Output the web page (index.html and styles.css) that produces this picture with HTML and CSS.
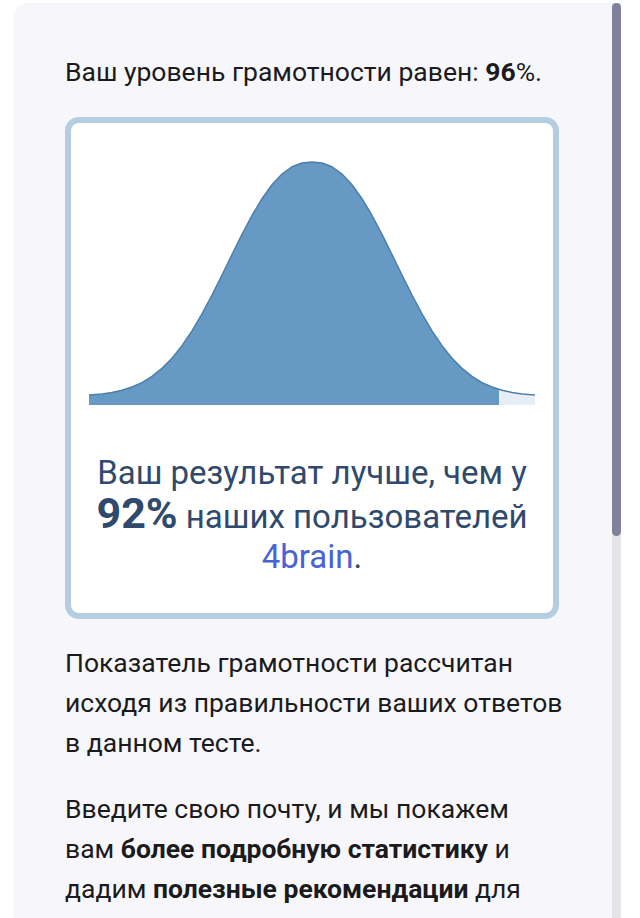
FILE: index.html
```html
<!DOCTYPE html>
<html lang="ru">
<head>
<meta charset="utf-8">
<title>Результат</title>
<link rel="stylesheet" href="styles.css">
</head>
<body>
<div class="screen">
  <main class="panel">
    <p class="lead">Ваш уровень грамотности равен: <b>96</b>%.</p>
    <section class="card">
      <svg class="chart" width="446" height="245" viewBox="0 0 446 245" aria-hidden="true">
        <defs>
          <clipPath id="done"><rect x="0" y="0" width="410" height="245"/></clipPath>
          <path id="bell" d="M0,235 L13,233.9 L23,232.4 L33,230.2 L43,227 L53,222.6 L63,216.4 L73,208.4 L83,198.2 L93,185.7 L103,170.9 L113,153.8 L123,135 L133,115 L143,94.5 L153,74.4 L163,55.5 L173,38.7 L183,24.7 L193,14 L203,6.8 L213,3 L223,2 L233,3 L243,6.8 L253,14 L263,24.7 L273,38.7 L283,55.5 L293,74.4 L303,94.5 L313,115 L323,135 L333,153.8 L343,170.9 L353,185.7 L363,198.2 L373,208.4 L383,216.4 L393,222.6 L403,227 L413,230.2 L423,232.4 L433,233.9 L446,235"/>
        </defs>
        <path class="area-rest" d="M0,235 L13,233.9 L23,232.4 L33,230.2 L43,227 L53,222.6 L63,216.4 L73,208.4 L83,198.2 L93,185.7 L103,170.9 L113,153.8 L123,135 L133,115 L143,94.5 L153,74.4 L163,55.5 L173,38.7 L183,24.7 L193,14 L203,6.8 L213,3 L223,2 L233,3 L243,6.8 L253,14 L263,24.7 L273,38.7 L283,55.5 L293,74.4 L303,94.5 L313,115 L323,135 L333,153.8 L343,170.9 L353,185.7 L363,198.2 L373,208.4 L383,216.4 L393,222.6 L403,227 L413,230.2 L423,232.4 L433,233.9 L446,235 L446,245 L0,245 Z"/>
        <path class="area-done" clip-path="url(#done)" d="M0,235 L13,233.9 L23,232.4 L33,230.2 L43,227 L53,222.6 L63,216.4 L73,208.4 L83,198.2 L93,185.7 L103,170.9 L113,153.8 L123,135 L133,115 L143,94.5 L153,74.4 L163,55.5 L173,38.7 L183,24.7 L193,14 L203,6.8 L213,3 L223,2 L233,3 L243,6.8 L253,14 L263,24.7 L273,38.7 L283,55.5 L293,74.4 L303,94.5 L313,115 L323,135 L333,153.8 L343,170.9 L353,185.7 L363,198.2 L373,208.4 L383,216.4 L393,222.6 L403,227 L413,230.2 L423,232.4 L433,233.9 L446,235 L446,245 L0,245 Z"/>
        <use class="curve" href="#bell"/>
      </svg>
      <p class="result">Ваш результат лучше, чем у<br><b class="pct">92%</b> наших пользователей<br><a class="brand">4brain</a>.</p>
    </section>
    <p class="text">Показатель грамотности рассчитан<br>исходя из правильности ваших ответов<br>в данном тесте.</p>
    <p class="text">Введите свою почту, и мы покажем<br>вам <b>более подробную статистику</b> и<br>дадим <b>полезные рекомендации</b> для</p>
  </main>
  <div class="scrollbar"><div class="thumb"></div></div>
</div>
</body>
</html>
```

FILE: styles.css
```css
html, body {
  margin: 0;
  background: #ffffff;
}

body {
  font-family: Roboto, "Noto Sans", "Liberation Sans", sans-serif;
}

.screen {
  display: flex;
  height: 918px;
  overflow: hidden;
}

.panel {
  box-sizing: border-box;
  width: 599px;
  margin: 3px 0 0 13px;
  padding: 50px 53px 0 52px;
  background: #f7f7fb;
  border-radius: 16px 0 0 0;
  color: #1b1b1d;
}

.lead {
  margin: 0;
  font-size: 26.5px;
  line-height: 38px;
  white-space: nowrap;
}

.lead b,
.text b {
  font-weight: 700;
}

.card {
  margin-top: 26px;
  border: 6px solid #b5cde1;
  border-radius: 14px;
  background: #ffffff;
  padding: 37px 0 36px;
}

.chart {
  display: block;
  margin: 0 auto;
}

.area-rest {
  fill: #e8eef6;
}

.area-done {
  fill: #6699c3;
}

.curve {
  fill: none;
  stroke: #4d7fab;
  stroke-width: 1.5;
  stroke-linejoin: round;
}

.result {
  margin: 48px 0 0;
  text-align: center;
  font-size: 33px;
  line-height: 40px;
  color: #2f4a6c;
  white-space: nowrap;
}

.pct {
  font-size: 43px;
  font-weight: 700;
}

.brand {
  color: #4763d6;
  text-decoration: none;
}

.text {
  margin: 24px 0 0;
  font-size: 26.5px;
  line-height: 40px;
  white-space: nowrap;
}

.text + .text {
  margin-top: 26px;
}

.scrollbar {
  width: 9px;
  margin-top: 3px;
  background: #e4e4ea;
}

.thumb {
  height: 533px;
  background: #7f8299;
  border-radius: 5px;
}
```
